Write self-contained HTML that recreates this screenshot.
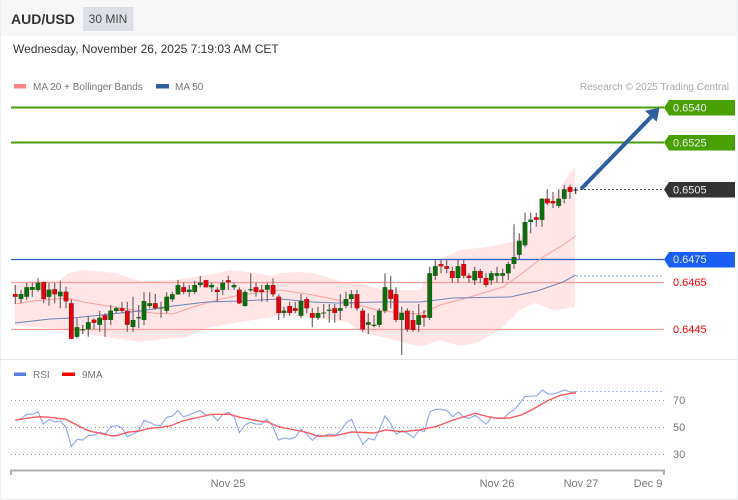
<!DOCTYPE html>
<html><head><meta charset="utf-8"><style>
html,body{margin:0;padding:0;background:#fff}
svg{display:block;font-family:"Liberation Sans",sans-serif}
</style></head><body>
<svg width="738" height="500" viewBox="0 0 738 500" xmlns="http://www.w3.org/2000/svg">
<rect width="738" height="500" fill="#fff"/>
<rect x="0" y="0" width="738" height="36" fill="#f7f7f7"/>
<rect x="0" y="0" width="1" height="500" fill="#edf0f2"/>
<rect x="737" y="0" width="1" height="500" fill="#edf0f2"/>
<rect x="0" y="498.500" width="738" height="1.500" fill="#eceef0"/>
<rect x="0" y="359" width="738" height="1" fill="#e2e4e6"/>
<rect x="83" y="7" width="50.500" height="24" fill="#dcdfe6"/>
<text x="11" y="24" font-size="14" font-weight="700" fill="#333">AUD/USD</text>
<text x="108" y="23" font-size="12" fill="#444" text-anchor="middle">30 MIN</text>
<text x="13" y="53" font-size="12" fill="#333">Wednesday, November 26, 2025 7:19:03 AM CET</text>
<rect x="14" y="84" width="12" height="4.500" fill="#ff8285"/>
<text x="33" y="90" font-size="10" fill="#777">MA 20 + Bollinger Bands</text>
<rect x="156" y="84" width="13" height="4.500" fill="#2f5f9f"/>
<text x="175" y="90" font-size="10" fill="#777">MA 50</text>
<text x="729" y="90" font-size="10" fill="#aaa" text-anchor="end">Research © 2025 Trading Central</text>

<path fill="#ffe5e5" d="M15 285L30 281L60 280L68 273L85 270L115 273L140 281L173 280L207 275L230 270L240 271L273 276L280 273L297 272L313 273L330 278L343 282L357 283L377 288L383 290L393 290L420 290L430 270L440 259L460 250L487 247L513 242L520 237L533 228L553 197L575 167V307L557 310L553 310L535 303L520 310L500 330L477 343L460 346L440 340L420 347L387 338L363 333L347 322L313 318L280 315L273 317L240 322L207 328L183 338L173 338L140 342L100 336L83 333L67 330L15 325Z"/>

<path d="M11 107.500H664" stroke="#4a9e0c" stroke-width="2" fill="none"/>
<path d="M11 142.500H664" stroke="#4a9e0c" stroke-width="2" fill="none"/>
<path d="M580 189.500H664" stroke="#555" stroke-width="1" stroke-dasharray="2 2" fill="none"/>
<path d="M11 259.500H664" stroke="#2b5fd0" stroke-width="1.200" fill="none"/>
<path d="M576 276H664" stroke="#b4c4e0" stroke-width="1.500" stroke-dasharray="2 2" fill="none"/>
<path d="M11 282.500H664" stroke="#ff9a9a" stroke-width="1.300" fill="none"/>
<path d="M11 329.500H664" stroke="#ff9a9a" stroke-width="1.300" fill="none"/>

<path fill="none" stroke="#ff9da0" stroke-width="1" d="M15 304L33 301L67 298L83 302L140 311L153 313L173 314L190 308L217 300L240 295L280 290L313 295L337 300L370 308L380 311L420 314L440 305L470 297L503 287L520 275L543 257L563 245L575.700 236"/>
<path fill="none" stroke="#6a86b8" stroke-width="1" d="M15 323L50 319L73 318L140 311L173 306L207 302L240 301L280 299L313 302L337 303L380 302L420 302L453 298L510 297L537 291L563 282L575.700 275"/>

<path fill="none" stroke="#6e6868" stroke-width="1.200" d="M15.300 285V304M21 290V303.300M26.700 282.700V300M32.300 282.700V296.700M38 278.300V291.700M43.700 281.700V303.300M49 282.700V305.700M54.700 282.700V303.300M60.300 280.700V308.300M66 286.700V308.300M71.300 299.300V339.300M77 318.300V338.300M82.700 325V334M88.300 315.700V336.700M94 318.300V329.300M99.700 310.700V331.700M105 313.300V336.700M110.700 305V325M116.300 306.700V313.300M122 301.700V313.300M127.300 301.700V331.700M133 296.700V331.700M138.700 305V328.300M144 292.300V325M149.700 292.300V308.300M155.300 294V310M161 301.700V317.700M166.700 292.300V313.300M172.300 291.700V301.700M178 280V295M183.700 282.700V294.300M189.300 285V296.700M194.700 280.700V294M200.300 275.700V287.300M206 280V287.300M211.700 282.700V292M217.300 287.300V301.700M222.700 280V295M228.300 275.700V290M234 282.700V290M239.300 287.300V304M245 290V306.700M250.700 273.300V291.700M256 282.700V296.700M261.700 285V301.700M267.300 282.700V301.700M273 278.300V296.700M278.700 294.300V320M284 306.700V317.700M289.700 301.700V315.700M295.300 301.700V313.300M301 294.300V317.700M306.700 296.700V313.300M312.300 308.300V327.300M318 306.700V320M323.700 304V318.300M329.300 304V322.700M334.700 304V322.700M340.300 294.300V320M346 291.700V308.300M351.300 290V308.300M357 290V310.700M362.700 308.300V331.700M368.300 313.300V334M374 315V327.300M379.300 308.300V327.300M385 273.300V313.300M390.700 275.700V308.300M396 287.300V322.300M401.700 306.700V355M407.300 308.300V331.700M413 310.700V331.700M418.700 304V331.700M424 310V326.700M429.700 266.700V320M435.300 259.300V280M441 259.300V273.300M446.700 260V273.300M452.300 266.700V282.700M458 260V282.700M463.700 260V278.300M469 273.300V282.700M474.700 266.700V285M480.300 268.700V282.700M486 273.300V287.300M491.300 271V285M497 266.700V282.700M502.700 268.700V282.700M508.300 261.700V280.300M514 224.300V268.700M519.300 233.300V259.300M525 212.700V247.300M530.700 212.700V233.300M536.300 212.700V226.700M542 198.300V226.700M547.300 189.300V205.300M553 192V208M558.700 189.300V208M564.300 184.700V203.300M570 184.700V198.700"/>
<path fill="none" stroke="#1a1a1a" stroke-width="1" d="M575.700 187.300V194M573.500 190H578"/>

<path fill="none" stroke="#2a4a2a" stroke-width="4.800" d="M21 294V299M26.700 287.300V296.700M32.300 287V289.700M38 282.700V290M49 289.700V296.700M60.300 291.700V296.300M77 327.300V336.700M82.700 329.300V330.300M88.300 322.300V329.300M99.700 317.700V324.700M110.700 310.700V320M116.300 308.300V311M133 320V327M138.700 317.200V318.200M144 301V320M149.700 303.300V306M161 307.500V308.500M166.700 296.700V310.700M172.300 294.300V299.300M178 285V294.300M189.300 289.700V292M194.700 285V292M200.300 282.700V285M211.700 285V287.300M222.700 282.700V289.700M234 285V287.300M245 292V306M250.700 289.200V290.200M267.300 285V289.700M284 310.700V313M301 301V315.700M318 313V317.700M323.700 312.500V313.500M329.300 309.800V310.800M340.300 308.300V310.700M346 299V306M351.300 294.300V299M368.300 322.300V324.700M374 324.700V325.700M379.300 310.700V324.700M385 287.300V310.700M401.700 313V320M418.700 315.300V324.700M429.700 273.300V317.700M435.300 266.300V275.700M458 266.300V278M474.700 271V280.300M491.300 273.300V280.300M497 273.300V275.700M502.700 273.300V275.700M508.300 264V273.300M514 257V264M519.300 240.700V254.700M525 222V245.300M530.700 219.700V222M542 198.700V219.700M558.700 198.700V205.700M564.300 189.300V198.700"/>
<path fill="none" stroke="#0c6f0c" stroke-width="3.800" d="M21 294V299M26.700 287.300V296.700M32.300 287V289.700M38 282.700V290M49 289.700V296.700M60.300 291.700V296.300M77 327.300V336.700M82.700 329.300V330.300M88.300 322.300V329.300M99.700 317.700V324.700M110.700 310.700V320M116.300 308.300V311M133 320V327M138.700 317.200V318.200M144 301V320M149.700 303.300V306M161 307.500V308.500M166.700 296.700V310.700M172.300 294.300V299.300M178 285V294.300M189.300 289.700V292M194.700 285V292M200.300 282.700V285M211.700 285V287.300M222.700 282.700V289.700M234 285V287.300M245 292V306M250.700 289.200V290.200M267.300 285V289.700M284 310.700V313M301 301V315.700M318 313V317.700M323.700 312.500V313.500M329.300 309.800V310.800M340.300 308.300V310.700M346 299V306M351.300 294.300V299M368.300 322.300V324.700M374 324.700V325.700M379.300 310.700V324.700M385 287.300V310.700M401.700 313V320M418.700 315.300V324.700M429.700 273.300V317.700M435.300 266.300V275.700M458 266.300V278M474.700 271V280.300M491.300 273.300V280.300M497 273.300V275.700M502.700 273.300V275.700M508.300 264V273.300M514 257V264M519.300 240.700V254.700M525 222V245.300M530.700 219.700V222M542 198.700V219.700M558.700 198.700V205.700M564.300 189.300V198.700"/>
<path fill="none" stroke="#4a2a2a" stroke-width="4.800" d="M15.300 294V296.700M43.700 282.300V299M54.700 289.300V294.300M66 291.700V301.300M71.300 303.300V338.700M94 319.700V322.700M105 315.300V320M122 308.300V310.700M127.300 310.700V324.700M155.300 303.300V308.300M183.700 287.300V292M206 280.300V287.300M217.300 289.700V292M228.300 280.300V282.300M239.300 289.700V303.300M256 287.300V292M261.700 289.700V292M273 285V294.300M278.700 296.700V313M289.700 306V313M295.300 308.300V310.700M306.700 299V308.300M312.300 313V317.700M334.700 308.300V313M357 294.300V308.300M362.700 310.700V329.300M390.700 289.700V299M396 294.300V320M407.300 310.700V329.300M413 320V330M424 315V317.700M441 264V266.300M446.700 266.300V268.700M452.300 271V278M463.700 264V275.700M469 275.700V278M480.300 271V278M486 278V285M536.300 217.300V219.700M547.300 198.700V203.300M553 201V203.300M570 187V191.700"/>
<path fill="none" stroke="#e8000b" stroke-width="3.800" d="M15.300 294V296.700M43.700 282.300V299M54.700 289.300V294.300M66 291.700V301.300M71.300 303.300V338.700M94 319.700V322.700M105 315.300V320M122 308.300V310.700M127.300 310.700V324.700M155.300 303.300V308.300M183.700 287.300V292M206 280.300V287.300M217.300 289.700V292M228.300 280.300V282.300M239.300 289.700V303.300M256 287.300V292M261.700 289.700V292M273 285V294.300M278.700 296.700V313M289.700 306V313M295.300 308.300V310.700M306.700 299V308.300M312.300 313V317.700M334.700 308.300V313M357 294.300V308.300M362.700 310.700V329.300M390.700 289.700V299M396 294.300V320M407.300 310.700V329.300M413 320V330M424 315V317.700M441 264V266.300M446.700 266.300V268.700M452.300 271V278M463.700 264V275.700M469 275.700V278M480.300 271V278M486 278V285M536.300 217.300V219.700M547.300 198.700V203.300M553 201V203.300M570 187V191.700"/>

<path d="M581 189L653 115" stroke="#2d5f9e" stroke-width="4" fill="none"/>
<path d="M645 110.700L659.500 107.700L656.700 121.700Z" fill="#2d5f9e"/>

<path d="M664 107.500L669 100H735V115.500H669Z" fill="#47a000"/>
<path d="M664 142.500L669 135H735V150.500H669Z" fill="#47a000"/>
<path d="M664 189.500L669 182H735V197.500H669Z" fill="#333"/>
<path d="M664 259.500L669 252H735V267.500H669Z" fill="#1a5ff2"/>
<text x="673" y="111.500" font-size="11" fill="#eef">0.6540</text>
<text x="673" y="146.500" font-size="11" fill="#eef">0.6525</text>
<text x="673" y="193.500" font-size="11" fill="#eee">0.6505</text>
<text x="673" y="263" font-size="11" fill="#e6eeff">0.6475</text>
<text x="673" y="286" font-size="11" fill="#f00">0.6465</text>
<text x="673" y="333" font-size="11" fill="#f00">0.6445</text>

<rect x="14" y="372.500" width="12" height="3.500" fill="#5b7fe0"/>
<text x="33" y="378" font-size="10" fill="#777">RSI</text>
<rect x="62" y="372.500" width="13" height="3.500" fill="#f00"/>
<text x="82" y="378" font-size="10" fill="#777">9MA</text>

<path d="M11 400.500H664M11 427.500H664M11 454.500H664" stroke="#999" stroke-width="1" stroke-dasharray="1 3" fill="none"/>
<path d="M576 391.500H664" stroke="#a8bcec" stroke-width="1" stroke-dasharray="2 2" fill="none"/>

<g transform="translate(0,360) scale(.33333)" fill="none" stroke="#8ba6ec" stroke-width="3.300">
<polyline points="46,180 63,176 80,163 97,163 114,156 130,192 148,178 165,186 182,183 198,203 214,259 232,238 248,240 265,226 282,226 299,217 316,221 333,200 350,197 365,203 382,230 399,222 416,213 432,181 449,187 466,196 483,196 500,172 517,168 533,152 550,170 567,165 584,157 601,152 618,165 635,163 652,182 669,163 686,157 703,172 718,218 735,195 750,187 767,192 784,193 801,178 818,198 835,240 852,234 869,237 886,232 903,208 920,222 937,241 954,225 971,228 988,222 1005,226 1022,212 1039,188 1055,178 1072,220 1089,253 1106,235 1123,240 1140,205 1155,168 1172,190 1189,223 1206,212 1223,220 1240,233 1257,211 1273,214 1290,155 1307,148 1324,148 1341,152 1358,170 1375,156 1392,172 1409,175 1426,166 1443,180 1457,192 1464,186 1474,172 1494,175 1511,175 1528,158 1544,148 1561,128 1574,110 1594,108 1610,108 1627,90 1644,102 1661,102 1678,96 1694,90 1711,96 1728,95"/>
</g>
<g transform="translate(0,360) scale(.33333)" fill="none" stroke="#ff5a62" stroke-width="4.200">
<polyline points="46,181 80,175 118,170 150,172 198,178 230,195 265,212 300,220 333,227 350,227 382,217 416,213 449,205 480,202 510,198 550,182 600,171 635,163 690,163 720,172 750,178 780,184 801,185 835,200 869,207 920,217 954,229 1005,227 1055,216 1123,219 1155,210 1206,215 1257,210 1310,199 1360,180 1426,160 1464,170 1494,175 1528,174 1564,165 1594,150 1644,122 1678,107 1711,100 1728,99"/>
</g>

<path d="M11 475V470.500H664V475" fill="none" stroke="#b0b0b4" stroke-width="2"/>
<text x="228" y="487" font-size="11" fill="#777" text-anchor="middle">Nov 25</text>
<text x="497" y="487" font-size="11" fill="#777" text-anchor="middle">Nov 26</text>
<text x="581" y="487" font-size="11" fill="#777" text-anchor="middle">Nov 27</text>
<text x="648" y="487" font-size="11" fill="#777" text-anchor="middle">Dec 9</text>
<text x="673" y="404" font-size="11" fill="#777">70</text>
<text x="673" y="431" font-size="11" fill="#777">50</text>
<text x="673" y="458" font-size="11" fill="#777">30</text>
</svg>
</body></html>
